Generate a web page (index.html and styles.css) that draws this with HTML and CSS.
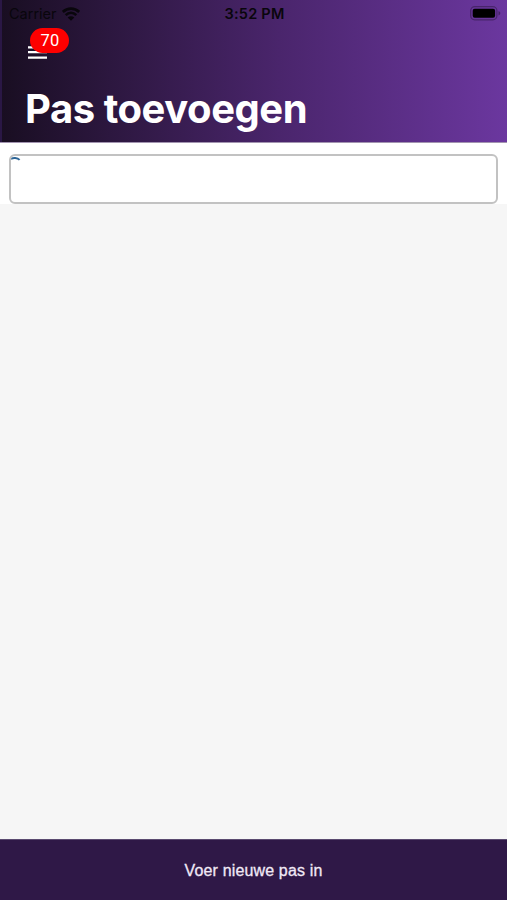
FILE: index.html
```html
<!DOCTYPE html>
<html lang="nl">
<head>
    <meta charset="UTF-8">
    <meta name="viewport" content="width=device-width, initial-scale=1.0">
    <title>Pas toevoegen</title>
    <link rel="stylesheet" href="styles.css">
</head>
<body>
    <div class="app">
        <header class="header">
            <div class="status-bar">
                <div class="carrier">
                    <span>Carrier</span>
                    <svg class="wifi" width="18" height="14" viewBox="0 0 18 14">
                        <path d="M0.8 4.9C5.4 0.4 12.6 0.4 17.2 4.9" fill="none" stroke="currentColor" stroke-width="2.8"/>
                        <path d="M3.7 8.1C6.8 5.1 11.2 5.1 14.3 8.1" fill="none" stroke="currentColor" stroke-width="2.6"/>
                        <path d="M9 13.8L5.7 10.5C7.5 8.8 10.5 8.8 12.3 10.5Z" fill="currentColor"/>
                    </svg>
                </div>
                <span class="time">3:52 PM</span>
                <svg class="battery" width="31" height="15" viewBox="0 0 31 15">
                    <rect x="0.7" y="0.7" width="26.2" height="13.1" rx="4" fill="none" stroke="#000" stroke-opacity="0.3" stroke-width="1.3"/>
                    <rect x="2.7" y="2.8" width="22.4" height="9" rx="2" fill="#000"/>
                    <path d="M28.5 5.1C30.9 5.9 30.9 8.6 28.5 9.4Z" fill="#000" fill-opacity="0.35"/>
                </svg>
            </div>
            <button class="menu-button" aria-label="Menu">
                <svg class="menu-icon" width="19" height="14" viewBox="0 0 19 14">
                    <path d="M0 1.3H19M0 6.2H19M0 11.7H19" fill="none" stroke="#fff" stroke-width="2.2"/>
                </svg>
                <span class="badge">70</span>
            </button>
            <h1>Pas toevoegen</h1>
        </header>

        <main class="content">
            <div class="card-field">
                <div class="card-box">
                    <svg class="card-mark" width="11" height="4" viewBox="0 0 11 4">
                        <path d="M0 1.9C2 0.7 6.4 0.5 8.6 2.9" fill="none" stroke="#2d6596" stroke-width="1.9"/>
                    </svg>
                </div>
            </div>
        </main>

        <button class="submit-button">Voer nieuwe pas in</button>
    </div>
</body>
</html>
```

FILE: styles.css
```css
* {
    box-sizing: border-box;
    margin: 0;
    padding: 0;
}

body {
    font-family: Inter, 'Liberation Sans', sans-serif;
    background: #f6f6f6;
}

button {
    border: none;
    font: inherit;
    cursor: pointer;
}

.app {
    display: flex;
    flex-direction: column;
    height: 100vh;
}

.header {
    height: 143px;
    border-bottom: 1px solid #a294b0;
    background: linear-gradient(90deg, #2a1745 2px, #190e22 2px, #4a256c 55%, #6b379f 100%);
    color: #fff;
}

.status-bar {
    display: grid;
    grid-template-columns: 1fr auto 1fr;
    align-items: center;
    height: 27px;
    padding: 0 6px 0 9px;
    color: #09060c;
    font-size: 14.5px;
}

.carrier {
    display: flex;
    align-items: center;
    gap: 5px;
}

.time {
    margin-right: 1px;
    font-weight: 600;
    letter-spacing: 0.25px;
}

.battery {
    justify-self: end;
}

.menu-button {
    position: relative;
    display: block;
    width: 19px;
    height: 14px;
    margin: 19px 0 0 28px;
    background: none;
}

.menu-icon {
    display: block;
}

.badge {
    position: absolute;
    top: -18px;
    left: 2.4px;
    width: 39px;
    height: 24.5px;
    border-radius: 13px;
    background: #fe0000;
    color: #fff;
    font-family: Roboto, sans-serif;
    font-size: 16.5px;
    line-height: 25px;
    text-align: center;
}

h1 {
    margin: 24px 0 0 25px;
    font-size: 40px;
    font-weight: 700;
    letter-spacing: -0.45px;
    line-height: 50px;
    white-space: nowrap;
}

.content {
    flex: 1;
}

.card-field {
    height: 61px;
    padding: 11px 9px 0;
    background: #fff;
}

.card-box {
    height: 50px;
    border: 2px solid #c2c2c2;
    border-radius: 6px;
    overflow: hidden;
}

.card-mark {
    display: block;
    margin-top: 1px;
}

.submit-button {
    height: 61px;
    padding-top: 3px;
    background: #2f1847;
    box-shadow: inset 0 1px 0 #5b4a70;
    color: #f1e9f6;
    font-family: 'Liberation Sans', sans-serif;
    font-size: 16px;
    letter-spacing: 0.15px;
    -webkit-text-stroke: 0.3px #f1e9f6;
}
```
